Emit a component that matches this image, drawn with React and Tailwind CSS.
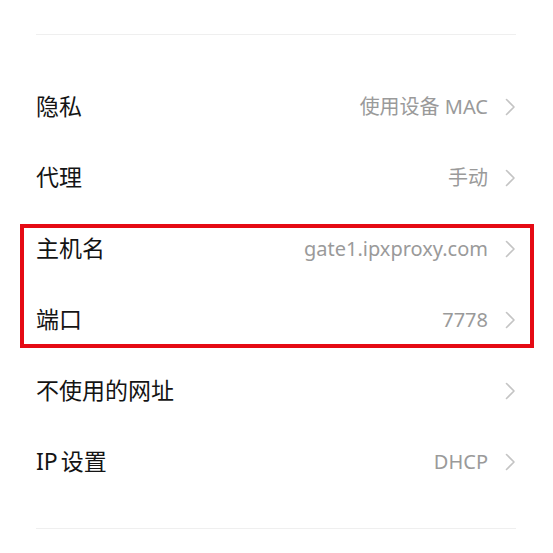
import { ChevronRight } from 'lucide-react';

const rows = [
  { label: '隐私', value: '使用设备 MAC' },
  { label: '代理', value: '手动' },
  { label: '主机名', value: 'gate1.ipxproxy.com' },
  { label: '端口', value: '7778' },
  { label: '不使用的网址', value: '' },
  { label: 'IP', rest: '设置', value: 'DHCP' },
];

const Chevron = () => (
  <svg width="11" height="18" viewBox="0 0 11 18" className="shrink-0">
    <path d="M1.5 1.5 L9 9 L1.5 16.5" fill="none" stroke="#c4c4c4" strokeWidth="1.6" strokeLinecap="round" strokeLinejoin="round" />
  </svg>
);

const Row = ({ label, rest, value }) => (
  <div className="flex h-[71px] items-center justify-between">
    <span className="text-[23px] text-[#141414]">
      {label}
      {rest && <span className="ml-[3px]">{rest}</span>}
    </span>
    <div className="flex items-center gap-[17px]">
      {value && <span className="text-[20px] text-[#9a9a9a]">{value}</span>}
      <Chevron />
    </div>
  </div>
);

export default function App() {
  return (
    <div
      className="relative h-[553px] w-[553px] overflow-hidden bg-white pl-[36px] pr-[37px] pt-[34px]"
      style={{ fontFamily: '"Noto Sans", "Noto Sans CJK SC", sans-serif' }}
    >
      <div className="h-px bg-[#efefef]" />
      <div className="pt-[36px]">
        {rows.map((r) => (
          <Row key={r.label} label={r.label} rest={r.rest} value={r.value} />
        ))}
      </div>
      <div className="mt-[31px] h-px bg-[#efefef]" />
      <div className="absolute left-[20px] top-[224px] h-[124px] w-[514px] border-[4px] border-[#e50a14]" />
    </div>
  );
}
